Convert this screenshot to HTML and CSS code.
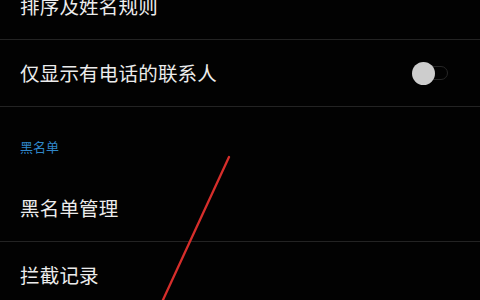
FILE: index.html
```html
<!DOCTYPE html>
<html lang="zh-CN">
<head>
<meta charset="utf-8">
<link rel="stylesheet" href="styles.css">
</head>
<body>
<div class="screen">
  <ul class="list">
    <li class="row"><span class="label">排序及姓名规则</span></li>
    <li class="row">
      <span class="label">仅显示有电话的联系人</span>
      <span class="switch"><span class="knob"></span></span>
    </li>
    <li class="section">黑名单</li>
    <li class="row"><span class="label">黑名单管理</span></li>
    <li class="row last"><span class="label">拦截记录</span></li>
  </ul>
  <svg class="mark" width="480" height="300" viewBox="0 0 480 300">
    <line x1="229" y1="157" x2="162" y2="302" stroke="#d62e2b" stroke-width="2.3" stroke-linecap="round"/>
  </svg>
</div>
</body>
</html>
```
FILE: styles.css
```css
html, body {
  margin: 0;
  padding: 0;
  background: #000;
}
.screen {
  position: relative;
  width: 480px;
  height: 300px;
  overflow: hidden;
  background: #020202;
  font-family: "Noto Sans CJK SC", "Noto Sans", sans-serif;
}
.list {
  list-style: none;
  margin: -27px 0 0 0;
  padding: 0;
}
.row {
  height: 66px;
  display: flex;
  align-items: center;
  justify-content: space-between;
  padding: 0 32px 0 20px;
  border-bottom: 1px solid #232323;
}
.row.last {
  border-bottom: none;
}
.label {
  color: #ececec;
  font-size: 19.5px;
  line-height: 1;
  letter-spacing: 0.2px;
}
.section {
  height: 68px;
  box-sizing: border-box;
  display: flex;
  align-items: flex-end;
  padding: 0 20px 22px 20px;
  color: #2f86c8;
  font-size: 13px;
  line-height: 1;
}
.switch {
  position: relative;
  width: 34px;
  height: 14px;
  border: 1.5px solid #262626;
  border-radius: 9px;
  box-sizing: border-box;
}
.knob {
  position: absolute;
  left: -3px;
  top: 50%;
  width: 23px;
  height: 23px;
  margin-top: -11.5px;
  border-radius: 50%;
  background: #cdcdcd;
}
.mark {
  position: absolute;
  left: 0;
  top: 0;
  pointer-events: none;
}
```
